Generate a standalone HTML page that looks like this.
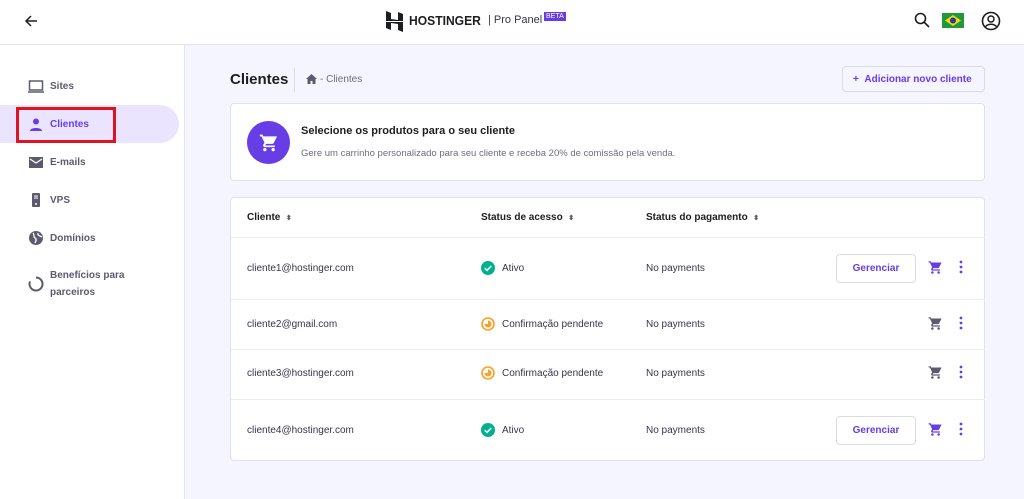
<!DOCTYPE html>
<html><head><meta charset="utf-8"><style>
*{box-sizing:border-box;margin:0;padding:0}
body{width:1024px;height:499px;overflow:hidden;font-family:"Liberation Sans",sans-serif;background:#f4f5ff;position:relative;color:#2f1c6a}
.hdr{position:absolute;left:0;top:0;width:1024px;height:45px;background:#fff;border-bottom:1px solid #e3e3ea}
.side{position:absolute;left:0;top:45px;width:185px;height:454px;background:#fff;border-right:1px solid #e3e3ea}
.nav{position:absolute;left:28px;font-size:10px;font-weight:bold;color:#5b5b6e;display:flex;align-items:center}
.nav svg{margin-right:6px}
.card{position:absolute;background:#fff;border:1px solid #e0e0ea;border-radius:4px}
.t{position:absolute;font-size:10px;color:#36344d}
.th{position:absolute;font-size:10px;font-weight:bold;color:#1d1e20}
.th small{font-size:7px;color:#5b5b6e}
.row{position:absolute;left:0;width:754px;border-top:1px solid #eeeef3}
.btn{position:absolute;left:605px;width:80px;height:29px;border:1px solid #dadce0;border-radius:4px;font-size:10px;font-weight:bold;color:#673de6;text-align:center;line-height:27px;background:#fff}
</style></head><body>
<div class="hdr">
<svg style="position:absolute;left:24px;top:14px" width="14" height="14" viewBox="0 0 14 14"><path d="M13 7H2M7 2L2 7l5 5" stroke="#1d1e20" stroke-width="1.5" fill="none"/></svg>
<svg style="position:absolute;left:386px;top:11px" width="17" height="21" viewBox="0 0 17 21"><path d="M0 0l5 2v6l7 1V1l5 2v7H0zM0 11h17v10l-5-2v-6l-7-1v7l-5-2z" fill="#1d1e20"/></svg>
<div style="position:absolute;left:409px;top:13px;font-size:13px;font-weight:bold;color:#1d1e20;transform:scaleX(0.93);transform-origin:left">HOSTINGER</div>
<div style="position:absolute;left:488px;top:14px;font-size:11px;color:#36344d">| Pro Panel</div>
<div style="position:absolute;left:544px;top:12px;font-size:7px;background:#673de6;color:#fff;padding:0 2px;line-height:9px">BETA</div>
<svg style="position:absolute;left:914px;top:12px" width="16" height="16" viewBox="0 0 16 16"><circle cx="6.5" cy="6.5" r="5" stroke="#1d1e20" stroke-width="1.6" fill="none"/><path d="M10 10l5 5" stroke="#1d1e20" stroke-width="1.6"/></svg>
<svg style="position:absolute;left:942px;top:13px" width="22" height="15" viewBox="0 0 22 15"><rect width="22" height="15" fill="#1f9a3a"/><path d="M11 2l8 5.5-8 5.5-8-5.5z" fill="#f7d417"/><circle cx="11" cy="7.5" r="3" fill="#213f96"/></svg>
<svg style="position:absolute;left:981px;top:11px" width="20" height="20" viewBox="0 0 20 20"><circle cx="10" cy="10" r="8.5" stroke="#1d1e20" stroke-width="1.6" fill="none"/><circle cx="10" cy="8" r="3" stroke="#1d1e20" stroke-width="1.5" fill="none"/><path d="M4.5 15.5c3-3 8-3 11 0" stroke="#1d1e20" stroke-width="1.5" fill="none"/></svg>
</div>
<div class="side">
<div style="position:absolute;left:0;top:60px;width:179px;height:38px;background:#ebe4ff;border-radius:0 19px 19px 0"></div>
<div style="position:absolute;left:16px;top:62px;width:100px;height:36px;border:3px solid #e0141e"></div>
<div class="nav" style="top:35px"><svg width="16" height="13" viewBox="0 0 16 13"><rect x="1.5" y="1" width="13" height="9" stroke="#5b5b6e" stroke-width="1.5" fill="none"/><path d="M0 12h16" stroke="#5b5b6e" stroke-width="1.5"/></svg>Sites</div>
<div class="nav" style="top:73px;color:#673de6"><svg width="16" height="13" viewBox="0 0 16 13"><circle cx="8" cy="3.5" r="3" fill="#673de6"/><path d="M2 13c0-4 12-4 12 0z" fill="#673de6"/></svg>Clientes</div>
<div class="nav" style="top:111px"><svg width="16" height="13" viewBox="0 0 16 13"><rect x="1" y="1" width="14" height="11" fill="#5b5b6e"/><path d="M2 3l6 4 6-4" stroke="#fff" stroke-width="1.3" fill="none"/></svg>E-mails</div>
<div class="nav" style="top:147px"><svg width="16" height="16" viewBox="0 0 16 16"><rect x="4" y="1" width="8" height="14" rx="1" fill="#5b5b6e"/><path d="M6 4h4M6 6h4" stroke="#fff"/><circle cx="8" cy="12" r="1" fill="#fff"/></svg>VPS</div>
<div class="nav" style="top:185px"><svg width="16" height="16" viewBox="0 0 16 16"><circle cx="8" cy="8" r="7" fill="#5b5b6e"/><path d="M5 3c2 2 0 4 2 5s1 3 0 5M10 3c-1 2 2 3 4 4" stroke="#fff" stroke-width="1.3" fill="none"/></svg>Domínios</div>
<div class="nav" style="top:222px;line-height:17px"><svg width="16" height="16" viewBox="0 0 16 16"><path d="M8 1.5a6.5 6.5 0 1 1-6 4" stroke="#5b5b6e" stroke-width="2" fill="none"/></svg>Benefícios para<br>parceiros</div>
</div>
<div style="position:absolute;left:230px;top:71px;font-size:15px;font-weight:bold;color:#1d1e20">Clientes</div>
<div style="position:absolute;left:294px;top:68px;width:1px;height:24px;background:#dadce0"></div>
<svg style="position:absolute;left:306px;top:74px" width="11" height="10" viewBox="0 0 11 10"><path d="M5.5 0L0 5h1.5v5h3V7h2v3h3V5H11z" fill="#5b5b6e"/></svg>
<div style="position:absolute;left:320px;top:74px;font-size:10px;color:#6d6d80">- Clientes</div>
<div style="position:absolute;left:842px;top:66px;width:143px;height:26px;border:1px solid #dadce0;border-radius:4px;font-size:10px;font-weight:bold;color:#673de6;line-height:25px;padding-left:10px;white-space:nowrap">+&nbsp;&nbsp;Adicionar novo cliente</div>
<div class="card" style="left:230px;top:103px;width:755px;height:78px">
<div style="position:absolute;left:16px;top:17px;width:43px;height:43px;border-radius:50%;background:#673de6"></div>
<svg style="position:absolute;left:28px;top:29px" width="20" height="20" viewBox="0 0 24 24"><path d="M7 18a2 2 0 1 0 0 4 2 2 0 0 0 0-4zM1 2v2h2l3.6 7.6-1.4 2.4A2 2 0 0 0 7 17h12v-2H7.4l1.1-2h7.5a2 2 0 0 0 1.7-1L21.7 4H5.2l-.9-2zm16 16a2 2 0 1 0 0 4 2 2 0 0 0 0-4z" fill="#fff"/></svg>
<div style="position:absolute;left:70px;top:21px;font-size:11px;font-weight:bold;color:#1d1e20">Selecione os produtos para o seu cliente</div>
<div style="position:absolute;left:70px;top:44px;font-size:9.5px;color:#6d6d80">Gere um carrinho personalizado para seu cliente e receba 20% de comissão pela venda.</div>
</div>
<div class="card" style="left:230px;top:197px;width:755px;height:264px">
<div class="th" style="left:16px;top:14px">Cliente&nbsp; <small>⬍</small></div>
<div class="th" style="left:250px;top:14px">Status de acesso&nbsp; <small>⬍</small></div>
<div class="th" style="left:415px;top:14px">Status do pagamento&nbsp; <small>⬍</small></div>
<div class="row" style="top:39px;height:62px">
<div class="t" style="left:16px;top:25px">cliente1@hostinger.com</div>
<svg style="position:absolute;left:250px;top:23px" width="14" height="14" viewBox="0 0 14 14"><circle cx="7" cy="7" r="7" fill="#00b090"/><path d="M3.8 7.2l2.2 2.2 4.2-4.4" stroke="#fff" stroke-width="1.6" fill="none"/></svg>
<div class="t" style="left:271px;top:25px">Ativo</div>
<div class="t" style="left:415px;top:25px">No payments</div>
<div class="btn" style="top:16px">Gerenciar</div>
<svg style="position:absolute;left:697px;top:22px" width="15" height="15" viewBox="0 0 24 24"><path d="M7 18a2 2 0 1 0 0 4 2 2 0 0 0 0-4zM1 2v2h2l3.6 7.6-1.4 2.4A2 2 0 0 0 7 17h12v-2H7.4l1.1-2h7.5a2 2 0 0 0 1.7-1L21.7 4H5.2l-.9-2zm16 16a2 2 0 1 0 0 4 2 2 0 0 0 0-4z" fill="#673de6"/></svg>
<svg style="position:absolute;left:728px;top:22px" width="4" height="14" viewBox="0 0 4 14"><circle cx="2" cy="2" r="1.4" fill="#673de6"/><circle cx="2" cy="7" r="1.4" fill="#673de6"/><circle cx="2" cy="12" r="1.4" fill="#673de6"/></svg>
</div>
<div class="row" style="top:101px;height:50px">
<div class="t" style="left:16px;top:19px">cliente2@gmail.com</div>
<svg style="position:absolute;left:250px;top:17px" width="14" height="14" viewBox="0 0 14 14"><circle cx="7" cy="7" r="6" stroke="#ffa024" stroke-width="1.6" fill="none"/><path d="M7 3.5a3.5 3.5 0 1 1-3.5 3.5H7z" fill="#ffa024"/></svg>
<div class="t" style="left:271px;top:19px">Confirmação pendente</div>
<div class="t" style="left:415px;top:19px">No payments</div>
<svg style="position:absolute;left:697px;top:16px" width="15" height="15" viewBox="0 0 24 24"><path d="M7 18a2 2 0 1 0 0 4 2 2 0 0 0 0-4zM1 2v2h2l3.6 7.6-1.4 2.4A2 2 0 0 0 7 17h12v-2H7.4l1.1-2h7.5a2 2 0 0 0 1.7-1L21.7 4H5.2l-.9-2zm16 16a2 2 0 1 0 0 4 2 2 0 0 0 0-4z" fill="#5b5b6e"/></svg>
<svg style="position:absolute;left:728px;top:16px" width="4" height="14" viewBox="0 0 4 14"><circle cx="2" cy="2" r="1.4" fill="#673de6"/><circle cx="2" cy="7" r="1.4" fill="#673de6"/><circle cx="2" cy="12" r="1.4" fill="#673de6"/></svg>
</div>
<div class="row" style="top:151px;height:50px">
<div class="t" style="left:16px;top:18px">cliente3@hostinger.com</div>
<svg style="position:absolute;left:250px;top:16px" width="14" height="14" viewBox="0 0 14 14"><circle cx="7" cy="7" r="6" stroke="#ffa024" stroke-width="1.6" fill="none"/><path d="M7 3.5a3.5 3.5 0 1 1-3.5 3.5H7z" fill="#ffa024"/></svg>
<div class="t" style="left:271px;top:18px">Confirmação pendente</div>
<div class="t" style="left:415px;top:18px">No payments</div>
<svg style="position:absolute;left:697px;top:15px" width="15" height="15" viewBox="0 0 24 24"><path d="M7 18a2 2 0 1 0 0 4 2 2 0 0 0 0-4zM1 2v2h2l3.6 7.6-1.4 2.4A2 2 0 0 0 7 17h12v-2H7.4l1.1-2h7.5a2 2 0 0 0 1.7-1L21.7 4H5.2l-.9-2zm16 16a2 2 0 1 0 0 4 2 2 0 0 0 0-4z" fill="#5b5b6e"/></svg>
<svg style="position:absolute;left:728px;top:15px" width="4" height="14" viewBox="0 0 4 14"><circle cx="2" cy="2" r="1.4" fill="#673de6"/><circle cx="2" cy="7" r="1.4" fill="#673de6"/><circle cx="2" cy="12" r="1.4" fill="#673de6"/></svg>
</div>
<div class="row" style="top:201px;height:62px">
<div class="t" style="left:16px;top:25px">cliente4@hostinger.com</div>
<svg style="position:absolute;left:250px;top:23px" width="14" height="14" viewBox="0 0 14 14"><circle cx="7" cy="7" r="7" fill="#00b090"/><path d="M3.8 7.2l2.2 2.2 4.2-4.4" stroke="#fff" stroke-width="1.6" fill="none"/></svg>
<div class="t" style="left:271px;top:25px">Ativo</div>
<div class="t" style="left:415px;top:25px">No payments</div>
<div class="btn" style="top:16px">Gerenciar</div>
<svg style="position:absolute;left:697px;top:22px" width="15" height="15" viewBox="0 0 24 24"><path d="M7 18a2 2 0 1 0 0 4 2 2 0 0 0 0-4zM1 2v2h2l3.6 7.6-1.4 2.4A2 2 0 0 0 7 17h12v-2H7.4l1.1-2h7.5a2 2 0 0 0 1.7-1L21.7 4H5.2l-.9-2zm16 16a2 2 0 1 0 0 4 2 2 0 0 0 0-4z" fill="#673de6"/></svg>
<svg style="position:absolute;left:728px;top:22px" width="4" height="14" viewBox="0 0 4 14"><circle cx="2" cy="2" r="1.4" fill="#673de6"/><circle cx="2" cy="7" r="1.4" fill="#673de6"/><circle cx="2" cy="12" r="1.4" fill="#673de6"/></svg>
</div>
</div>
</body></html>
